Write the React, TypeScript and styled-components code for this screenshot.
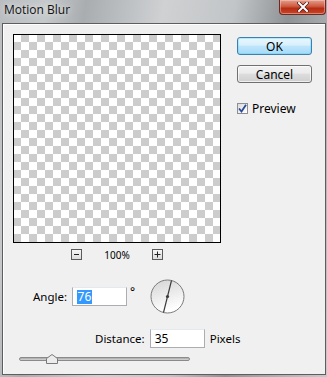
import React from 'react'
import styled, { createGlobalStyle } from 'styled-components'

const GlobalStyle = createGlobalStyle`
  html, body {
    margin: 0;
    padding: 0;
  }
  body {
    font-family: "Noto Sans", "DejaVu Sans", sans-serif;
    font-size: 11.5px;
    color: #000;
  }
`

const Window = styled.div`
  width: 327px;
  height: 377px;
  box-sizing: border-box;
  padding: 0 1px 2px 2px;
  display: flex;
  flex-direction: column;
  background: linear-gradient(
    100deg,
    #b9bdc0 0%,
    #c6c9cb 12%,
    #a9adb0 22%,
    #cfd1d3 42%,
    #c2c5c7 60%,
    #8f9396 74%,
    #a2a6a9 82%,
    #c7cacc 100%
  );
`

const TitleBar = styled.div`
  height: 23px;
  display: flex;
  align-items: flex-start;
  justify-content: space-between;
`

const Title = styled.div`
  font-family: "Open Sans", "Noto Sans", sans-serif;
  font-size: 12px;
  line-height: 20px;
  padding-left: 2px;
  color: #111;
  text-shadow: 0 0 6px rgba(255, 255, 255, 0.9);
`

const CloseButton = styled.div`
  width: 47px;
  height: 15px;
  box-sizing: border-box;
  border: 1px solid #6c2a22;
  border-top: none;
  border-radius: 0 0 4px 4px;
  background: linear-gradient(180deg, #e2a08e 0%, #cf5a40 45%, #b52d14 60%, #c8462a 100%);
  display: flex;
  align-items: center;
  justify-content: center;
  box-shadow: inset 0 0 0 1px rgba(255, 210, 200, 0.45);
`

const Panel = styled.div`
  flex: 1;
  background: #f0f0f0;
  border: 1px solid #5e5e5e;
  box-shadow: inset 1px 1px 0 #ffffff;
  display: flex;
  flex-direction: column;
`

const TopRow = styled.div`
  display: flex;
  padding: 10px 0 0 10px;
  gap: 16px;
`

const PreviewColumn = styled.div`
  display: flex;
  flex-direction: column;
  width: 208px;
`

const Preview = styled.div`
  width: 208px;
  height: 209px;
  box-sizing: border-box;
  border: 1px solid #000;
  background-color: #fff;
  background-image: conic-gradient(#cccccc 25%, #ffffff 0 50%, #cccccc 0 75%, #ffffff 0);
  background-size: 16px 16px;
  background-position: -1px -1px;
`

const ZoomRow = styled.div`
  display: flex;
  align-items: center;
  justify-content: center;
  gap: 22px;
  margin-top: 5px;
  height: 13px;
`

const ZoomButton = styled.div`
  width: 11px;
  height: 11px;
  box-sizing: border-box;
  border: 1px solid #5a5a5a;
  background: linear-gradient(180deg, #f6f6f6, #dcdcdc);
  display: flex;
  align-items: center;
  justify-content: center;
`

const ZoomText = styled.span`
  font-size: 10px;
  line-height: 12px;
`

const ButtonColumn = styled.div`
  display: flex;
  flex-direction: column;
  padding-top: 3px;
`

const DialogButton = styled.div<{ $primary?: boolean }>`
  width: 75px;
  height: 18px;
  box-sizing: border-box;
  border: 1px solid ${(p) => (p.$primary ? '#3c7fb1' : '#707070')};
  border-radius: 3px;
  background: ${(p) =>
    p.$primary
      ? 'linear-gradient(180deg, #eaf6fd 0%, #d9f0fc 45%, #bee6fd 50%, #a7d9f5 100%)'
      : 'linear-gradient(180deg, #f2f2f2 0%, #ebebeb 45%, #dddddd 50%, #cfcfcf 100%)'};
  box-shadow: inset 0 0 0 1px ${(p) => (p.$primary ? '#48d1fa55' : '#ffffffaa')};
  font-size: 12px;
  display: flex;
  align-items: center;
  justify-content: center;
  margin-bottom: 10px;
`

const CheckRow = styled.label`
  display: flex;
  align-items: center;
  gap: 4px;
  margin-top: 7px;
  font-size: 12px;
`

const CheckBox = styled.span`
  width: 11px;
  height: 11px;
  box-sizing: border-box;
  border: 1px solid #8f8f8f;
  background: linear-gradient(135deg, #dcdcdc, #ffffff);
  display: flex;
  align-items: center;
  justify-content: center;
`

const Params = styled.div`
  display: flex;
  flex-direction: column;
  padding-left: 16px;
`

const AngleRow = styled.div`
  display: flex;
  align-items: center;
  margin-top: 18px;
  padding-left: 14px;
`

const FieldLabel = styled.span`
  margin-right: 5px;
`

const Field = styled.div`
  width: 55px;
  height: 19px;
  box-sizing: border-box;
  border: 1px solid #abadb3;
  border-top-color: #e3e9ef;
  background: #fff;
  padding: 1px 4px;
  font-size: 12px;
  display: flex;
  align-items: center;
`

const Selected = styled.span`
  background: #3399ff;
  color: #fff;
  line-height: 14px;
  padding: 0 0.5px;
`

const Degree = styled.span`
  font-size: 12px;
  align-self: flex-start;
  margin: 4px 0 0 3px;
  width: 20px;
`

const DistanceRow = styled.div`
  display: flex;
  align-items: center;
  margin-top: 15px;
  padding-left: 76px;
`

const Unit = styled.span`
  margin-left: 5px;
`

const Slider = styled.div`
  margin-top: 6px;
  width: 171px;
  height: 10px;
  display: flex;
  align-items: center;
  position: relative;
`

const Track = styled.div`
  width: 100%;
  height: 4px;
  box-sizing: border-box;
  border: 1px solid #8a8a8a;
  border-radius: 2px;
  background: linear-gradient(180deg, #a8a8a8, #d6d6d6);
`

const Thumb = styled.svg`
  position: absolute;
  left: 27px;
  top: 0;
`

function Dial({ angle }: { angle: number }) {
  const r = 16.5
  const rad = (angle * Math.PI) / 180
  const dx = Math.cos(rad) * r
  const dy = Math.sin(rad) * r
  return (
    <svg width="35" height="35" viewBox="0 0 35 35">
      <defs>
        <linearGradient id="dialFill" x1="0" y1="0" x2="0.3" y2="1">
          <stop offset="0" stopColor="#d4d4d4" />
          <stop offset="1" stopColor="#ffffff" />
        </linearGradient>
      </defs>
      <circle cx="17.5" cy="17.5" r={r} fill="url(#dialFill)" stroke="#7a7a7a" strokeWidth="1" />
      <line
        x1={17.5 + dx}
        y1={17.5 - dy}
        x2={17.5 - dx}
        y2={17.5 + dy}
        stroke="#3a3a3a"
        strokeWidth="1.2"
      />
      <circle cx="17.5" cy="17.5" r="1.6" fill="#3a3a3a" />
    </svg>
  )
}

export default function App() {
  return (
    <>
      <GlobalStyle />
      <Window>
        <TitleBar>
          <Title>Motion Blur</Title>
          <CloseButton>
            <svg width="12" height="10" viewBox="0 0 12 10">
              <path
                d="M2 1 L10 9 M10 1 L2 9"
                stroke="#4a1a14"
                strokeWidth="3.4"
                strokeLinecap="square"
              />
              <path
                d="M2 1 L10 9 M10 1 L2 9"
                stroke="#ffffff"
                strokeWidth="2"
                strokeLinecap="square"
              />
            </svg>
          </CloseButton>
        </TitleBar>
        <Panel>
          <TopRow>
            <PreviewColumn>
              <Preview />
              <ZoomRow>
                <ZoomButton>
                  <svg width="7" height="7" viewBox="0 0 7 7">
                    <path d="M1 3.5 H6" stroke="#222" strokeWidth="1" />
                  </svg>
                </ZoomButton>
                <ZoomText>100%</ZoomText>
                <ZoomButton>
                  <svg width="7" height="7" viewBox="0 0 7 7">
                    <path d="M0.5 3.5 H6.5 M3.5 0.5 V6.5" stroke="#222" strokeWidth="1" />
                  </svg>
                </ZoomButton>
              </ZoomRow>
            </PreviewColumn>
            <ButtonColumn>
              <DialogButton $primary>OK</DialogButton>
              <DialogButton>Cancel</DialogButton>
              <CheckRow>
                <CheckBox>
                  <svg width="9" height="9" viewBox="0 0 9 9">
                    <path
                      d="M1 4.5 L3.5 7.5 L8 0.8"
                      stroke="#2a4a9a"
                      strokeWidth="1.8"
                      fill="none"
                    />
                  </svg>
                </CheckBox>
                Preview
              </CheckRow>
            </ButtonColumn>
          </TopRow>
          <Params>
            <AngleRow>
              <FieldLabel>Angle:</FieldLabel>
              <Field>
                <Selected>76</Selected>
              </Field>
              <Degree>°</Degree>
              <Dial angle={76} />
            </AngleRow>
            <DistanceRow>
              <FieldLabel>Distance:</FieldLabel>
              <Field>35</Field>
              <Unit>Pixels</Unit>
            </DistanceRow>
            <Slider>
              <Track />
              <Thumb width="12" height="10" viewBox="0 0 12 10">
                <path
                  d="M0.5 9.5 V4.5 L6 0.5 L11.5 4.5 V9.5 Z"
                  fill="#ececec"
                  stroke="#7a7a7a"
                  strokeWidth="1"
                />
              </Thumb>
            </Slider>
          </Params>
        </Panel>
      </Window>
    </>
  )
}
